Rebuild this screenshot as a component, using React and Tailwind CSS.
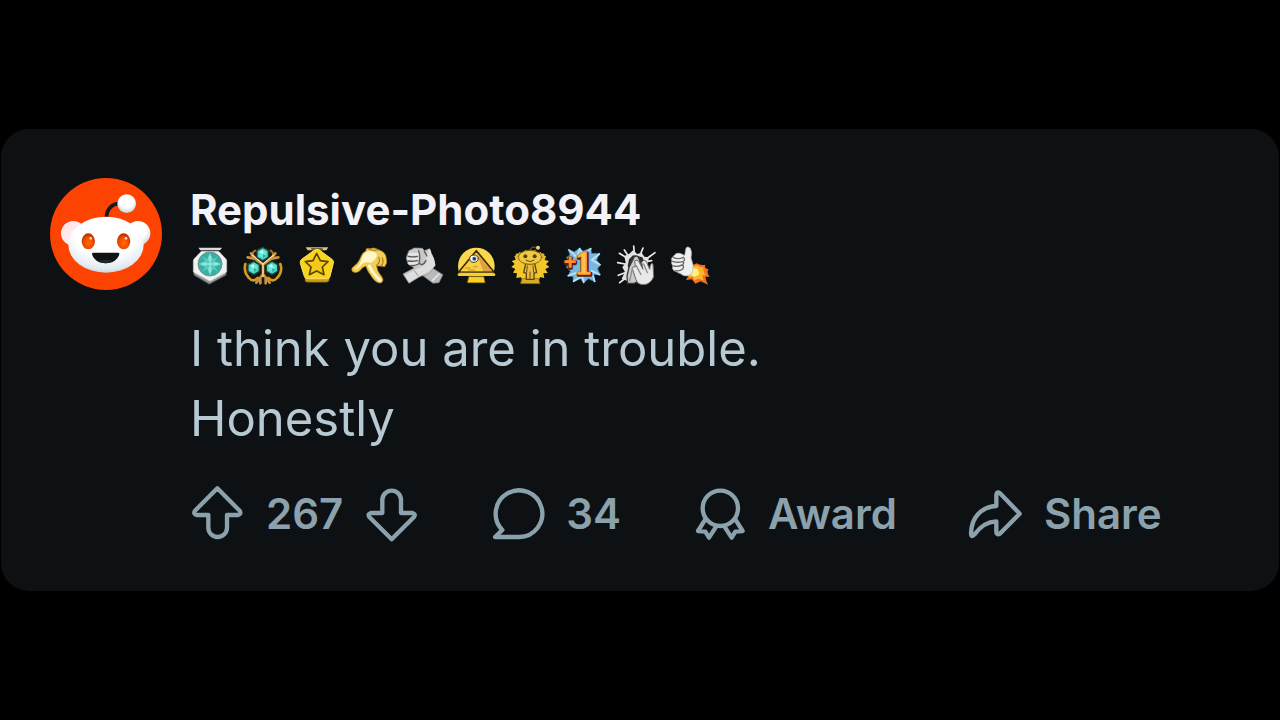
import { useState } from 'react'

function Avatar() {
  return (
    <svg className="size-28 shrink-0" viewBox="0 0 336 336" role="img" aria-label="User avatar">
      <defs>
        <radialGradient id="head" cx="0.5" cy="0.3" r="0.75">
          <stop offset="0.55" stopColor="#ffffff" />
          <stop offset="0.85" stopColor="#e2eaf0" />
          <stop offset="1" stopColor="#b4c3ce" />
        </radialGradient>
        <radialGradient id="ball" cx="0.5" cy="0.35" r="0.65">
          <stop offset="0.55" stopColor="#ffffff" />
          <stop offset="1" stopColor="#c6d4dd" />
        </radialGradient>
        <radialGradient id="eye" cx="0.5" cy="0.6" r="0.6">
          <stop offset="0" stopColor="#ff6a00" />
          <stop offset="0.6" stopColor="#f04a00" />
          <stop offset="1" stopColor="#b02c00" />
        </radialGradient>
      </defs>
      <circle cx="168" cy="168" r="168" fill="#fc4301" />
      <circle cx="70" cy="166" r="37" fill="#ffe9ee" />
      <circle cx="264" cy="166" r="37" fill="url(#ball)" />
      <path d="M169 122 C169 94 185 77 208 77" fill="none" stroke="#17191b" strokeWidth="11" strokeLinecap="round" />
      <circle cx="230" cy="77" r="28" fill="url(#ball)" />
      <ellipse cx="168" cy="200" rx="113" ry="84" fill="url(#head)" />
      <ellipse cx="115" cy="190" rx="20" ry="24" fill="url(#eye)" />
      <ellipse cx="221" cy="190" rx="20" ry="24" fill="url(#eye)" />
      <circle cx="122" cy="181" r="4" fill="#ffd9c4" />
      <circle cx="228" cy="181" r="4" fill="#ffd9c4" />
      <path d="M131 224 H203 Q209 224 208 229 C203 246 187 256 167 256 C147 256 131 246 126 229 Q125 224 131 224Z" fill="#101315" />
      <path d="M146 249 Q167 241 188 249 Q179 256 167 256 Q155 256 146 249Z" fill="#1d292f" />
    </svg>
  )
}

function Badge({ label, children }) {
  return (
    <svg className="size-10 overflow-visible" viewBox="0 0 120 120" role="img" aria-label={label} strokeLinejoin="round" strokeLinecap="round">
      {children}
    </svg>
  )
}

function Gem({ x, y }) {
  return (
    <g transform={`translate(${x} ${y})`}>
      <path d="M0 -20 L17 -10 V10 L0 20 L-17 10 V-10Z" fill="#4fd6c4" stroke="#154a45" strokeWidth="4" />
      <path d="M0 -12 L10 -6 V6 L0 12 L-10 6 V-6Z" fill="#6de9da" />
      <path d="M-10 -6 L0 -12 L2 0Z" fill="#d2fff8" />
      <path d="M10 6 L0 12 L2 0Z" fill="#28a99a" />
    </g>
  )
}

function Badges() {
  return (
    <div className="mt-3 flex w-full max-w-[520px] justify-between">
      <Badge label="Ternion hex">
        <path d="M25 5 H96 L90 13 H31Z" fill="#d8dcdc" />
        <path d="M10 76 L12 88 L58 115 L108 88 L110 76Z" fill="#8f9696" stroke="#3b4040" strokeWidth="3" />
        <path d="M36 16 H84 Q87 16 89 19 L108 39 Q110 42 110 45 V75 Q110 78 107 80 L63 104 Q60 106 57 104 L13 80 Q10 78 10 75 V45 Q10 42 12 39 L31 19 Q33 16 36 16Z" fill="#f0f1f1" stroke="#c4c8c8" strokeWidth="2" />
        <circle cx="60" cy="54" r="36" fill="#38afa4" stroke="#7d908f" strokeWidth="3" />
        <path d="M60 20 L70 44 L94 54 L70 64 L60 88 L50 64 L26 54 L50 44Z" fill="#72ddd0" />
        <path d="M36 30 L60 46 L84 30 L69 54 L84 78 L60 62 L36 78 L51 54Z" fill="#58cabe" />
        <path d="M60 30 V78 M36 54 H84" stroke="#a7f2e9" strokeWidth="3" />
      </Badge>

      <Badge label="Crystal trio">
        <path d="M8 62 Q2 48 14 44 L20 24 L38 8 L60 2 L82 8 L100 25 L106 44 Q118 48 113 62 L116 84 L99 102 L76 104 L66 114 H54 L46 104 L22 102 L5 84Z" fill="#1c150a" />
        <path d="M7 54 Q1 78 18 96 Q30 110 44 96 M112 54 Q120 78 102 96 Q90 110 76 96" fill="none" stroke="#d49a1c" strokeWidth="8" />
        <path d="M36 14 Q24 22 30 34 M83 14 Q95 22 89 34" fill="none" stroke="#a8761b" strokeWidth="6" />
        <path d="M24 22 L38 40 L60 56 L82 40 L97 22 M14 34 L34 38 M106 34 L86 38 M60 55 V86 M60 84 L40 110 M60 84 L80 110 M52 98 V112 M68 98 V112" fill="none" stroke="#c8923f" strokeWidth="8" />
        <path d="M28 27 L60 54 L92 27 M60 55 V92" fill="none" stroke="#f5d79c" strokeWidth="4" />
        <Gem x={59} y={24} />
        <Gem x={32} y={66} />
        <Gem x={87} y={66} />
      </Badge>

      <Badge label="Gold star">
        <path d="M26 4 H94 L88 13 H32Z" fill="#e2c66b" />
        <path d="M44 9 H76" stroke="#594510" strokeWidth="4" />
        <path d="M24 92 V104 Q24 109 32 109 H89 Q96 108 97 102 V90Z" fill="#c89b16" stroke="#5a4208" strokeWidth="2" />
        <path d="M53 12 Q60 8 67 12 L105 40 Q111 45 109 52 L99 91 Q97 98 91 98 H30 Q24 98 22 91 L10 52 Q8 45 14 40Z" fill="#f8d51b" stroke="#fbe568" strokeWidth="3" />
        <path d="M59 22 L70 44 L93 47 L76 63 L81 86 L59 75 L37 86 L42 63 L25 47 L48 44Z" fill="#f5c91a" stroke="#584405" strokeWidth="5" />
      </Badge>

      <Badge label="Pointing hand">
        <path d="M48 14 Q46 5 58 8 Q74 2 87 12 Q108 18 109 38 Q113 52 104 62 L92 60 L80 60 Q81 76 94 90 Q104 104 94 110 Q81 115 66 94 Q52 76 47 60 Q36 64 31 73 Q20 84 8 77 Q1 69 10 62 Q26 52 32 34 Q36 20 48 14Z" fill="#f3cf58" stroke="#a67b18" strokeWidth="2" />
        <path d="M50 17 Q67 11 81 24 Q80 42 62 50 Q45 46 36 54 Q24 70 12 70 Q30 59 35 39 Q38 23 50 17Z" fill="#fff6cc" />
        <path d="M58 60 Q69 84 90 102" fill="none" stroke="#fff9d8" strokeWidth="9" />
        <path d="M80 58 Q93 49 86 34 M93 60 Q103 50 97 36" fill="none" stroke="#b1841f" strokeWidth="4" />
        <path d="M56 9 Q69 16 84 11" fill="none" stroke="#a97d22" strokeWidth="4" />
      </Badge>

      <Badge label="Handshake">
        <path d="M82 62 L120 86 L108 110 L90 112 L58 88Z" fill="#b9b9b9" stroke="#7a7a7a" strokeWidth="2" />
        <path d="M18 14 L34 6 L58 7 L64 14 L80 8 L88 30 L97 58 L78 82 L50 92 L18 112 L0 84 L34 66 L15 54 L10 36Z" fill="#c9c9c9" stroke="#979797" strokeWidth="2" />
        <path d="M76 10 Q84 8 84 22 Q97 39 96 58 Q80 80 54 88 L18 109 L5 88 L42 69 Q64 63 68 45Z" fill="#dedede" />
        <path d="M19 25 H44 M16 38 H43 M20 51 H44" stroke="#e6e6e6" strokeWidth="9" />
        <path d="M16 31 Q30 34 43 31 M15 45 Q30 47 43 44 M24 59 Q36 60 46 54 M47 14 Q53 32 48 52 Q60 62 69 44 M64 16 L72 30" fill="none" stroke="#5a5a5a" strokeWidth="4" />
        <path d="M34 74 L46 90" stroke="#9a9a9a" strokeWidth="3" />
        <path d="M88 104 L108 84" stroke="#e6e6e6" strokeWidth="5" />
      </Badge>

      <Badge label="Pyramid">
        <circle cx="58" cy="60" r="55" fill="#f9d84e" />
        <path d="M0 86 H120 V122 H0Z" fill="#0e1113" />
        <path d="M36 92 H80 L84 110 H32Z" fill="#f9d026" stroke="#a37b07" strokeWidth="2" />
        <path d="M6 86 H111" stroke="#f6ce32" strokeWidth="8" />
        <path d="M58 14 L111 78 H5Z" fill="#eebc2e" stroke="#3b2c06" strokeWidth="5" />
        <path d="M58 20 L78 76 H11Z" fill="#f6d144" />
        <path d="M58 20 L80 76 H105Z" fill="#dfa045" />
        <path d="M24 66 H40 M50 62 H60 M34 72 H52" stroke="#c69220" strokeWidth="3" />
        <ellipse cx="51" cy="38" rx="13" ry="11" fill="#f7f4ee" stroke="#4a3d1b" strokeWidth="3" />
        <circle cx="52" cy="38" r="6" fill="#456aa0" />
        <circle cx="52" cy="38" r="3" fill="#11151d" />
      </Badge>

      <Badge label="Golden snoo">
        <path d="M61 8 L67 18 L76 11 L80 23 L92 18 L94 30 L108 30 L104 42 L117 45 L108 55 L118 63 L106 69 L113 81 L100 82 L103 96 L90 93 L86 106 H37 L33 94 L19 96 L21 82 L9 80 L16 69 L4 63 L14 54 L5 45 L17 41 L13 30 L27 31 L28 18 L40 23 L45 11 L54 18Z" fill="#f3c62b" />
        <path d="M36 98 H86 L90 113 H32Z" fill="#d8aa25" stroke="#765709" strokeWidth="2" />
        <path d="M47 53 H74 L80 80 L72 81 V100 H49 V81 L41 80Z" fill="#e6bd42" stroke="#5e4507" strokeWidth="4" />
        <path d="M60 78 V99 M52 60 L50 78 M69 60 L71 78" stroke="#6b5010" strokeWidth="3" />
        <circle cx="24" cy="30" r="8" fill="#e0b23a" />
        <circle cx="96" cy="30" r="8" fill="#e0b23a" />
        <ellipse cx="60" cy="34" rx="35" ry="21" fill="#efc944" stroke="#86660f" strokeWidth="3" />
        <path d="M60 13 L67 3 L79 5" fill="none" stroke="#5e4b1c" strokeWidth="4" />
        <circle cx="84" cy="5" r="6" fill="#ead284" />
        <circle cx="46" cy="31" r="6" fill="#5a4207" />
        <circle cx="74" cy="31" r="6" fill="#5a4207" />
        <path d="M48 43 Q60 51 72 43" fill="none" stroke="#684b08" strokeWidth="3" />
      </Badge>

      <Badge label="Plus one">
        <path d="M16 10 L34 17 L50 6 L60 15 L84 6 L86 22 L110 22 L101 42 L113 56 L104 68 L112 86 L92 86 L96 108 L76 98 L62 111 L52 98 L30 108 L30 92 L14 90 L22 76 L10 64 L18 48 L10 34 L20 28Z" fill="#78b9df" stroke="#326b91" strokeWidth="2" />
        <path d="M18 12 L42 34 L50 8 L60 28 L83 8 M109 24 L86 42 L111 56 M110 86 L86 74 L95 106 M62 109 L58 90 L32 106 M16 89 L40 80" fill="none" stroke="#bfe3f6" strokeWidth="5" />
        <g fontFamily="Liberation Serif, serif" fontWeight="700">
          <text x="4" y="72" fontSize="64" fill="#ae3610" stroke="#5e1d08" strokeWidth="11">+</text>
          <text x="39" y="86" fontSize="98" fill="#ae3610" stroke="#5e1d08" strokeWidth="11">1</text>
          <text x="3" y="70" fontSize="64" fill="#ff9d32" stroke="#ff8a28" strokeWidth="4">+</text>
          <text x="37" y="83" fontSize="98" fill="#ffc04e" stroke="#ffa238" strokeWidth="4">1</text>
        </g>
      </Badge>

      <Badge label="Applause">
        <path d="M7 22 L30 36 M22 12 L34 30 M50 0 L52 24 M78 6 L70 26 M114 20 L92 36 M104 44 L92 46 M2 50 L24 54 M4 88 L24 80 M8 110 L26 96" stroke="#ececec" strokeWidth="5" />
        <path d="M22 30 L36 24 L49 12 L60 24 L74 20 L82 32 L96 34 L90 60 L30 104 L14 98 L24 78 L16 64 L26 50Z" fill="#e2e2e2" />
        <path d="M36 40 L48 28 L62 30 L76 34 L82 46 L60 60 L40 78 L32 60Z" fill="#2a2d2f" />
        <path d="M52 32 Q62 26 66 38 L80 74 L66 104 L52 112 H32 L30 90 L36 64Z" fill="#cbcbcb" stroke="#3c3c3c" strokeWidth="4" />
        <path d="M54 44 Q61 38 66 48 L78 70 L74 48 Q80 39 88 46 L98 70 Q100 48 108 54 L110 92 Q102 113 82 116 Q62 117 57 101 L46 68 Q46 60 54 62Z" fill="#e9e9e9" stroke="#6b6b6b" strokeWidth="3" />
        <path d="M57 58 L72 86 M80 54 L91 80 M46 68 L38 104" fill="none" stroke="#8d8d8d" strokeWidth="4" />
      </Badge>

      <Badge label="Thumbs up with flame">
        <path d="M62 60 L80 52 Q92 60 106 56 Q101 66 116 70 Q108 79 119 92 L106 92 Q108 105 114 116 L92 106 L76 113 L66 100 L48 102 L56 88Z" fill="#f2711a" />
        <path d="M64 62 L82 58 Q90 66 101 64 Q97 76 108 88 L97 88 L100 103 L84 98 L72 104 L68 92 L56 94Z" fill="#ffb52e" />
        <path d="M66 66 L83 68 L88 84 L75 92 L62 88Z" fill="#fff080" />
        <path d="M44 28 L48 6 Q53 -1 61 7 Q67 18 63 35 L69 56 Q72 73 62 87 Q44 94 33 84 L12 74 Q4 67 9 60 Q2 52 6 45 Q1 36 11 30 Q18 19 30 22Z" fill="#f0f0f0" stroke="#a9a9a9" strokeWidth="2" />
        <path d="M10 34 Q24 42 40 34 Q48 42 38 47 Q22 51 8 46 M11 60 Q25 64 38 56 Q44 50 38 47 M16 74 Q29 77 38 69 Q43 62 38 57" fill="none" stroke="#6b6b6b" strokeWidth="4" />
      </Badge>
    </div>
  )
}

function ActionIcon({ children }) {
  return (
    <svg className="size-14 shrink-0" viewBox="0 0 168 168" fill="none" stroke="currentColor" strokeWidth="13" strokeLinejoin="round" strokeLinecap="round" aria-hidden="true">
      {children}
    </svg>
  )
}

function Action({ label, children }) {
  return (
    <button type="button" className="flex items-center gap-5 whitespace-nowrap">
      <ActionIcon>{children}</ActionIcon>
      {label}
    </button>
  )
}

export default function App() {
  const [votes, setVotes] = useState(267)

  return (
    <main className="flex min-h-screen flex-col justify-center bg-black font-['Inter',sans-serif]">
      <article className="mx-px flex gap-7 rounded-[28px] bg-[#0e1113] p-[49px]">
        <Avatar />
        <div className="min-w-0 flex-1 pt-2">
          <h1 className="text-[42px] leading-12 font-bold text-[#f2f2f8]">Repulsive-Photo8944</h1>
          <Badges />
          <p className="mt-7 text-[49px] leading-[70px] text-[#b7cad4]">
            I think you are in trouble.
            <br />
            Honestly
          </p>
          <div className="mt-8 flex items-center gap-[71px] text-[42px] leading-14 font-semibold text-[#8ba2ad]">
            <div className="flex items-center gap-5">
              <button type="button" aria-label="Upvote" onClick={() => setVotes(votes + 1)}>
                <ActionIcon>
                  <path d="M82 7 L149 74 Q155 84 145 87 H111 V125 a28 28 0 0 1 -56 0 V87 H19 Q9 84 15 74Z" />
                </ActionIcon>
              </button>
              <span>{votes}</span>
              <button type="button" aria-label="Downvote" onClick={() => setVotes(votes - 1)}>
                <ActionIcon>
                  <path d="M86 160 L153 93 Q159 84 149 81 H114 V42 a28 28 0 0 0 -56 0 V81 H23 Q13 84 19 93Z" />
                </ActionIcon>
              </button>
            </div>
            <Action label="34">
              <path d="M84 153 H15 L37 132 A70 70 0 1 1 88 153Z" />
            </Action>
            <Action label="Award">
              <circle cx="85" cy="67" r="53" />
              <path d="M40 100 L18 135 L40 137 L51 155 L73 121 M130 100 L152 135 L130 137 L119 155 L97 121" />
            </Action>
            <Action label="Share">
              <path d="M85 60 V27 Q86 15 96 22 L155 83 L97 142 Q86 149 85 139 V106 C55 107 36 122 19 146 Q10 156 9 142 C10 95 40 62 85 60Z" />
            </Action>
          </div>
        </div>
      </article>
    </main>
  )
}
